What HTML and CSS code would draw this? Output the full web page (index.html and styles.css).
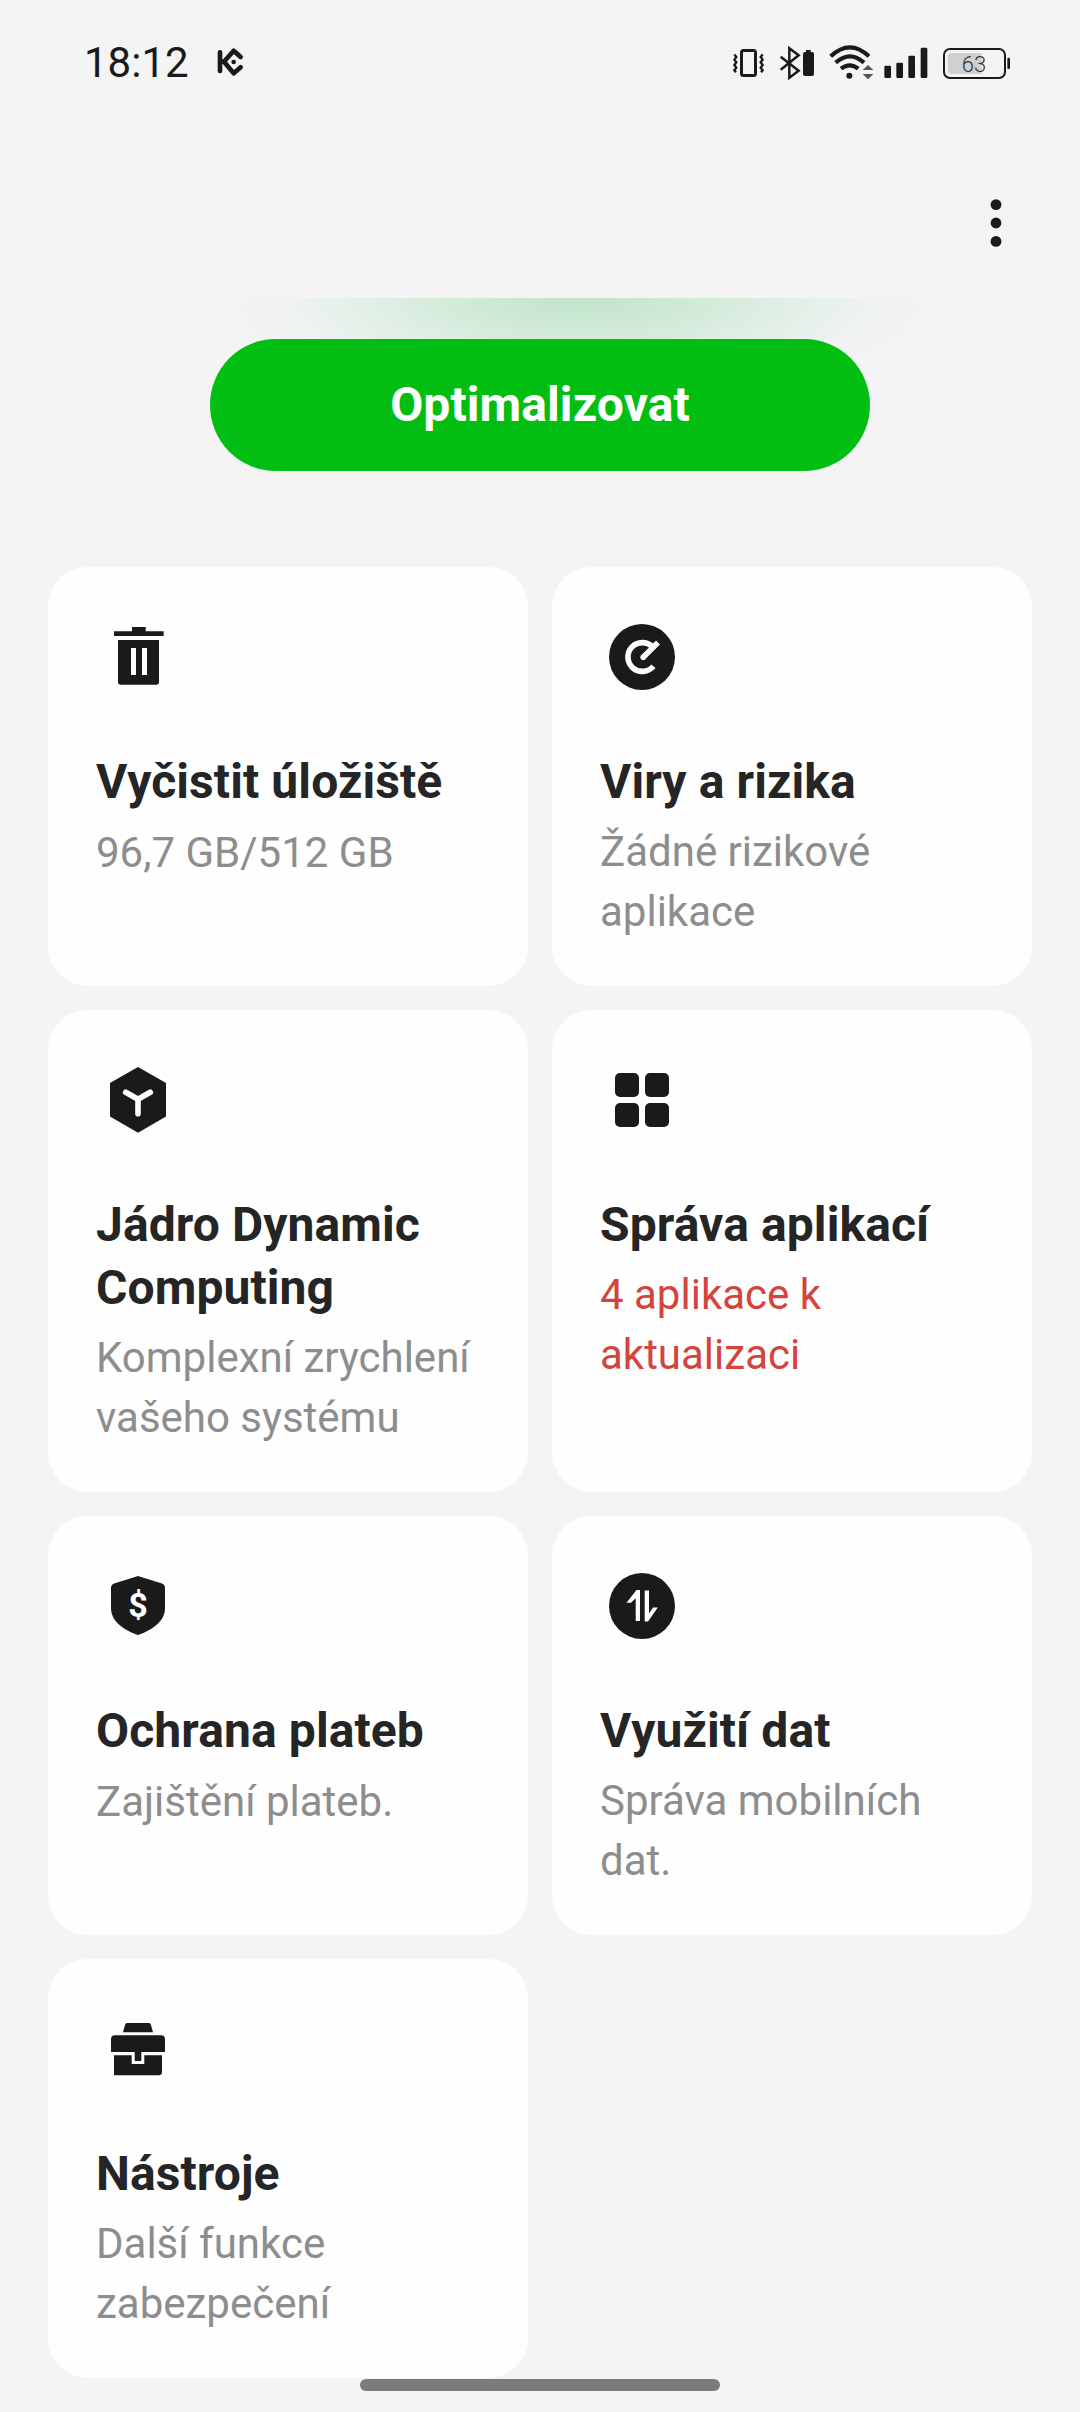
FILE: index.html
```html
<!DOCTYPE html>
<html lang="cs">
<head>
<meta charset="utf-8">
<title>Správce telefonu</title>
<link rel="stylesheet" href="styles.css">
</head>
<body>
<div class="screen">
  <header class="status">
    <span class="time">18:12</span>
    <svg class="app-mark" width="28" height="30" viewBox="468 81 84 90" fill="none" stroke="#1a1a1a" stroke-width="14" stroke-linecap="round" stroke-linejoin="round">
      <path d="M480 97V153M482 125H492L521 92L542 111M492 125L521 160L542 142"/>
      <circle cx="521" cy="126" r="7" fill="#1a1a1a" stroke="none"/>
    </svg>
    <div class="status-icons">
      <svg width="33" height="37" viewBox="66 39 99 111" fill="none" stroke="#1a1a1a">
        <rect x="94.500" y="58.500" width="42" height="75" rx="6" stroke-width="9"/>
        <path d="M73 70l6 8-6 8 6 8-6 8 6 8-6 8 5 6M158 70l-6 8 6 8-6 8 6 8-6 8 6 8-5 6" stroke-width="7"/>
      </svg>
      <svg width="36" height="37" viewBox="207 39 108 111">
        <path d="M212 77L266 119L238 140V52L266 73L212 116" fill="none" stroke="#1a1a1a" stroke-width="7.500"/>
        <path d="M288 57h14v6h4q6 0 6 6v60q0 6-6 6h-21q-6 0-6-6v-60q0-6 6-6h3z" fill="#1a1a1a"/>
      </svg>
      <svg class="wifi" width="45" height="37" viewBox="357 39 135 111">
        <g fill="none" stroke="#1a1a1a" stroke-width="12.500">
          <path d="M362 76Q420 22 477 76M377 95Q420 57 462 95M393 113Q419 93 445 113"/>
        </g>
        <circle cx="418" cy="134" r="9" fill="#1a1a1a"/>
        <path d="M458 117L474 102L490 117zM458 129H490L474 145z" fill="#555"/>
      </svg>
      <svg width="45" height="37" viewBox="519 39 135 111" fill="#1a1a1a">
        <rect x="523" y="104" width="20" height="37" rx="4"/>
        <rect x="559" y="95" width="20" height="46" rx="4"/>
        <rect x="595" y="74" width="20" height="67" rx="4"/>
        <rect x="632" y="50" width="20" height="91" rx="4"/>
      </svg>
      <svg width="69" height="37" viewBox="696 39 207 111">
        <rect x="702" y="54" width="183" height="87" rx="18" fill="none" stroke="#1a1a1a" stroke-width="6"/>
        <path d="M725 66H815V129H725Q713 129 713 117V78Q713 66 725 66z" fill="#d0d0d0"/>
        <rect x="892" y="80" width="8" height="34" rx="3" fill="#1a1a1a"/>
        <text x="792" y="121.500" text-anchor="middle" class="level">63</text>
      </svg>
    </div>
  </header>

  <div class="toolbar">
    <svg width="12" height="48" viewBox="0 0 12 48" fill="#1a1a1a">
      <circle cx="6" cy="5.600" r="5.400"/><circle cx="6" cy="24" r="5.400"/><circle cx="6" cy="42.400" r="5.400"/>
    </svg>
  </div>

  <section class="hero">
    <button class="optimize">Optimalizovat</button>
  </section>

  <main class="grid">
    <article class="card">
      <svg class="icon" viewBox="0 0 84 84">
        <path d="M36 12H49.700V16.300H67.700V21H18V16.300H36zM22 25H63V67Q63 69.700 60.300 69.700H24.700Q22 69.700 22 67z"/>
        <path class="cut" d="M35 33h5v27h-5zM46 33h5v27h-5z"/>
      </svg>
      <h2>Vyčistit úložiště</h2>
      <p class="single">96,7 GB/512 GB</p>
    </article>
    <article class="card">
      <svg class="icon" viewBox="0 0 84 84">
        <circle cx="42" cy="42" r="33"/>
        <g class="line"><path d="M52.500 31.800A14.400 14.400 0 1 0 53.400 51.200"/><path d="M43.200 42.200L58 27.600"/></g>
        <circle class="cut" cx="43.200" cy="42.200" r="2.800"/>
      </svg>
      <h2>Viry a rizika</h2>
      <p>Žádné rizikové aplikace</p>
    </article>
    <article class="card">
      <svg class="icon" viewBox="0 0 84 84">
        <path d="M42 9L70 25V58.500L42 74.700L14 58.500V25z"/>
        <path class="line round" d="M29.700 34.300L42 41.300L54.300 34.300M42 41.300V55.700"/>
      </svg>
      <h2>Jádro Dynamic Computing</h2>
      <p>Komplexní zrychlení vašeho systému</p>
    </article>
    <article class="card">
      <svg class="icon" viewBox="0 0 84 84">
        <rect x="15" y="15" width="24" height="24" rx="5"/><rect x="45" y="15" width="24" height="24" rx="5"/>
        <rect x="15" y="45" width="24" height="24" rx="5"/><rect x="45" y="45" width="24" height="24" rx="5"/>
      </svg>
      <h2>Správa aplikací</h2>
      <p class="alert">4 aplikace k aktualizaci</p>
    </article>
    <article class="card">
      <svg class="icon" viewBox="0 0 84 84">
        <path d="M40.500 12.400Q42 11.700 43.500 12.400L66 19.600Q69 20.700 69 24V44C69 57 57 65.500 43.500 70.600Q42 71.200 40.500 70.600C27 65.500 15 57 15 44V24Q15 20.700 18 19.600z"/>
        <text class="cut dollar" x="42" y="53.300" text-anchor="middle">$</text>
      </svg>
      <h2>Ochrana plateb</h2>
      <p class="single">Zajištění plateb.</p>
    </article>
    <article class="card">
      <svg class="icon" viewBox="0 0 84 84">
        <circle cx="42" cy="42" r="33"/>
        <path class="cut" d="M36.500 26H40V57H35.700V34.200L31 38.700H26.500z"/>
        <path class="cut" d="M48 57.600H44.700V26.500H49V49.400L53 43.500H57.800z"/>
      </svg>
      <h2>Využití dat</h2>
      <p>Správa mobilních dat.</p>
    </article>
    <article class="card">
      <svg class="icon" viewBox="0 0 84 84">
        <path d="M31 16H53Q54.500 16 55 18L57 25.300H27L29 18Q29.500 16 31 16zM19 28.300H65Q69 28.300 69 32.300V45H45.300V54H38.700V45H15V32.300Q15 28.300 19 28.300z"/>
        <path d="M18 48.200H35.700V57H48.300V48.200H66V65Q66 68.300 62.700 68.300H18z"/>
      </svg>
      <h2>Nástroje</h2>
      <p>Další funkce zabezpečení</p>
    </article>
  </main>

  <div class="home-bar"></div>
</div>
</body>
</html>
```
FILE: styles.css
```css
* { box-sizing: border-box; }

body {
  margin: 0;
  background: #f4f4f5;
  font-family: Roboto, "Liberation Sans", sans-serif;
  color: #252525;
}

.screen {
  display: flex;
  flex-direction: column;
  height: 2412px;
  overflow: hidden;
  background: linear-gradient(90deg, #f4f4f4 0, #f4f4f5 45%, #f4f3f6 55%, #f4f3f6 100%);
}

.status {
  display: flex;
  align-items: center;
  height: 124px;
  padding: 0 69px 0 84px;
  background: #f4f4f4;
}

.time {
  width: 132px;
  font-size: 42px;
  line-height: 50px;
  padding-top: 1px;
  color: #1a1a1a;
}

.status-icons {
  display: flex;
  align-items: center;
  gap: 14px;
  margin-left: auto;
}

.wifi { margin-right: -5px; }

.level {
  font-size: 66px;
  font-weight: 300;
  fill: #333;
}

.toolbar {
  display: flex;
  align-items: center;
  justify-content: flex-end;
  height: 174px;
  padding: 24px 78px 0 0;
  background: #f4f4f4;
}

.hero {
  display: flex;
  justify-content: center;
  align-items: flex-start;
  height: 269px;
  padding-top: 41px;
  background:
    radial-gradient(ellipse 370px 110px at 580px 0, rgba(120, 205, 140, .42), rgba(160, 222, 178, .32) 45%, rgba(190, 230, 205, .1) 78%, rgba(244, 244, 245, 0) 100%),
    linear-gradient(180deg, #f4f4f5, rgba(244, 244, 245, 0));
}

.optimize {
  width: 660px;
  height: 132px;
  padding: 0;
  border: 0;
  border-radius: 66px;
  background: #02be12;
  color: #fff;
  font: 700 48px/56px Roboto, "Liberation Sans", sans-serif;
  letter-spacing: .1px;
}

.grid {
  display: grid;
  grid-template-columns: 480px 480px;
  grid-template-rows: 419px 482px 419px 419px;
  gap: 24px;
  padding: 0 48px;
}

.card {
  padding: 48px 40px 0 48px;
  border-radius: 40px;
  background: #fefefe;
}

.icon {
  display: block;
  width: 84px;
  height: 84px;
  fill: #1a1a1b;
}

.cut { fill: #fff; }

.line {
  fill: none;
  stroke: #fff;
  stroke-width: 5.600px;
}

.round {
  stroke-linecap: round;
  stroke-linejoin: round;
}

.dollar {
  font-size: 34px;
  font-weight: 700;
}

.card h2 {
  margin: 51px 0 9px;
  font-size: 48px;
  font-weight: 700;
  line-height: 63px;
  letter-spacing: .1px;
}

.card p {
  margin: 0;
  font-size: 42px;
  line-height: 60px;
  color: #8d8d8e;
}

.card .single { padding-top: 1px; }

.card .alert { color: #d3443d; }

.home-bar {
  width: 360px;
  height: 12px;
  margin: 1px auto 0;
  border-radius: 6px;
  background: #7b7b7b;
}
```
